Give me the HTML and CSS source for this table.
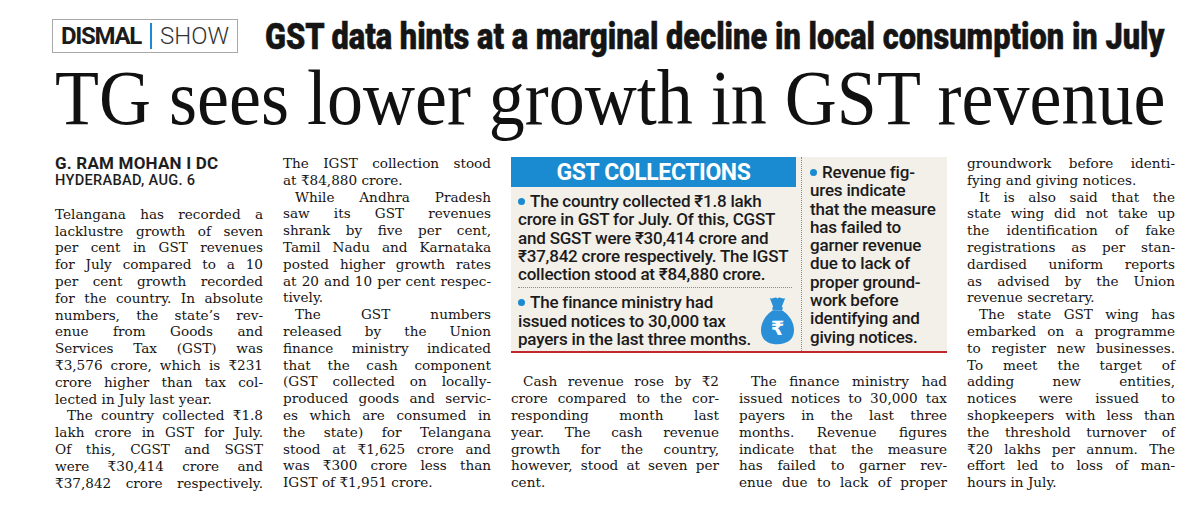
FILE: index.html
```html
<!DOCTYPE html>
<html lang="en">
<head>
<meta charset="utf-8">
<title>TG sees lower growth in GST revenue</title>
<link rel="stylesheet" href="styles.css">
</head>
<body>
<div class="page">
  <div class="kicker-row">
    <div class="kicker"><span class="k-bold">DISMAL</span><span class="k-bar"></span><span class="k-light">SHOW</span></div>
    <div class="deck">GST data hints at a marginal decline in local consumption in July</div>
  </div>
  <h1 class="headline"><span>TG sees lower growth in GST revenue</span></h1>

  <div class="grid">
    <div class="col c1">
      <div class="by-name">G. RAM MOHAN I DC</div>
      <div class="by-date">HYDERABAD, AUG. 6</div>
      <p class="para">
        <span class="j">Telangana has recorded a</span>
        <span class="j">lacklustre growth of seven</span>
        <span class="j">per cent in GST revenues</span>
        <span class="j">for July compared to a 10</span>
        <span class="j">per cent growth recorded</span>
        <span class="j">for the country. In absolute</span>
        <span class="j">numbers, the state’s rev-</span>
        <span class="j">enue from Goods and</span>
        <span class="j">Services Tax (GST) was</span>
        <span class="j">₹3,576 crore, which is ₹231</span>
        <span class="j">crore higher than tax col-</span>
        <span class="l">lected in July last year.</span>
      </p>
      <p class="para">
        <span class="j in">The country collected ₹1.8</span>
        <span class="j">lakh crore in GST for July.</span>
        <span class="j">Of this, CGST and SGST</span>
        <span class="j">were ₹30,414 crore and</span>
        <span class="j">₹37,842 crore respectively.</span>
      </p>
    </div>

    <div class="col c2">
      <p class="para">
        <span class="j">The IGST collection stood</span>
        <span class="l">at ₹84,880 crore.</span>
      </p>
      <p class="para">
        <span class="j in">While Andhra Pradesh</span>
        <span class="j">saw its GST revenues</span>
        <span class="j">shrank by five per cent,</span>
        <span class="j">Tamil Nadu and Karnataka</span>
        <span class="j">posted higher growth rates</span>
        <span class="j">at 20 and 10 per cent respec-</span>
        <span class="l">tively.</span>
      </p>
      <p class="para">
        <span class="j in">The GST numbers</span>
        <span class="j">released by the Union</span>
        <span class="j">finance ministry indicated</span>
        <span class="j">that the cash component</span>
        <span class="j">(GST collected on locally-</span>
        <span class="j">produced goods and servic-</span>
        <span class="j">es which are consumed in</span>
        <span class="j">the state) for Telangana</span>
        <span class="j">stood at ₹1,625 crore and</span>
        <span class="j">was ₹300 crore less than</span>
        <span class="l">IGST of ₹1,951 crore.</span>
      </p>
    </div>

    <div class="box">
      <div class="box-left">
        <div class="box-title">GST COLLECTIONS</div>
        <div class="pt"><span class="dot"></span>The country collected ₹1.8 lakh<br>crore in GST for July. Of this, CGST<br>and SGST were ₹30,414 crore and<br>₹37,842 crore respectively. The IGST<br>collection stood at ₹84,880 crore.</div>
        <div class="box-sep"></div>
        <div class="pt"><span class="dot"></span>The finance ministry had<br>issued notices to 30,000 tax<br>payers in the last three months.</div>
        <svg class="bag" viewBox="0 0 34 50" aria-hidden="true">
          <path d="M13 13.5 L9.5 4.5 C12.5 6.5 14.5 2.5 17 5 C19.5 2.5 21.5 6.5 24.5 4.5 L21 13.5 Z" fill="#2a8fd6"/>
          <rect x="12" y="13" width="10" height="3.2" rx="1.2" fill="#2a8fd6"/>
          <path d="M12.5 16.5 C5 21.5 0.5 29 1 37 C1.5 45.5 8 49.5 17 49.5 C26 49.5 32.5 45.5 33 37 C33.5 29 29 21.5 21.5 16.5 Z" fill="#2a8fd6"/>
          <text x="17" y="40.5" text-anchor="middle" class="bag-sym">₹</text>
        </svg>
      </div>
      <div class="box-right"><span class="dot"></span>Revenue fig-<br>ures indicate<br>that the measure<br>has failed to<br>garner revenue<br>due to lack of<br>proper ground-<br>work before<br>identifying and<br>giving notices.</div>
    </div>

    <div class="col c3">
      <p class="para">
        <span class="j in">Cash revenue rose by ₹2</span>
        <span class="j">crore compared to the cor-</span>
        <span class="j">responding month last</span>
        <span class="j">year. The cash revenue</span>
        <span class="j">growth for the country,</span>
        <span class="j">however, stood at seven per</span>
        <span class="l">cent.</span>
      </p>
    </div>

    <div class="col c4">
      <p class="para">
        <span class="j in">The finance ministry had</span>
        <span class="j">issued notices to 30,000 tax</span>
        <span class="j">payers in the last three</span>
        <span class="j">months. Revenue figures</span>
        <span class="j">indicate that the measure</span>
        <span class="j">has failed to garner rev-</span>
        <span class="j">enue due to lack of proper</span>
      </p>
    </div>

    <div class="col c5">
      <p class="para">
        <span class="j">groundwork before identi-</span>
        <span class="l">fying and giving notices.</span>
      </p>
      <p class="para">
        <span class="j in">It is also said that the</span>
        <span class="j">state wing did not take up</span>
        <span class="j">the identification of fake</span>
        <span class="j">registrations as per stan-</span>
        <span class="j">dardised uniform reports</span>
        <span class="j">as advised by the Union</span>
        <span class="l">revenue secretary.</span>
      </p>
      <p class="para">
        <span class="j in">The state GST wing has</span>
        <span class="j">embarked on a programme</span>
        <span class="j">to register new businesses.</span>
        <span class="j">To meet the target of</span>
        <span class="j">adding new entities,</span>
        <span class="j">notices were issued to</span>
        <span class="j">shopkeepers with less than</span>
        <span class="j">the threshold turnover of</span>
        <span class="j">₹20 lakhs per annum. The</span>
        <span class="j">effort led to loss of man-</span>
        <span class="l">hours in July.</span>
      </p>
    </div>
  </div>
</div>
</body>
</html>
```

FILE: styles.css
```css
html, body {
  margin: 0;
  padding: 0;
  background: #ffffff;
}

.page {
  width: 1120px;
  padding: 19px 25px 0 55px;
  color: #161414;
}

/* ---------- kicker row ---------- */
.kicker-row {
  display: flex;
  align-items: flex-start;
  height: 34px;
}

.kicker {
  flex: none;
  margin-left: -3px;
  width: 186px;
  height: 34px;
  box-sizing: border-box;
  border: 1.5px solid #a8a8a8;
  display: flex;
  align-items: center;
  padding-left: 8px;
  font-family: Roboto, "Liberation Sans", sans-serif;
  font-size: 24px;
  line-height: 1;
  color: #1b1b1b;
}

.k-bold {
  font-weight: 700;
  letter-spacing: -1.3px;
}

.k-bar {
  width: 2px;
  height: 26px;
  background: #1a8bd0;
  margin: 0 8px 0 9px;
}

.k-light {
  font-weight: 300;
  color: #333333;
}

/* condensed heavy deck: natural width, stretched vertically */
.deck {
  flex: none;
  margin-left: 27px;
  font-family: Roboto, "Liberation Sans", sans-serif;
  font-weight: 900;
  font-size: 30.8px;
  line-height: 34px;
  white-space: nowrap;
  color: #151515;
  -webkit-text-stroke: 0.4px #151515;
  transform: scaleY(1.22);
  transform-origin: left 11.6px;
}

/* ---------- main headline ---------- */
.headline {
  margin: 12px 0 0 0;
  font-family: "Liberation Serif", "Times New Roman", serif;
  font-weight: 400;
  font-size: 72px;
  line-height: 70px;
  white-space: nowrap;
  color: #111111;
}

.headline span {
  display: inline-block;
  transform: scaleY(1.097);
  transform-origin: left 59.3px;
}

/* ---------- body grid ---------- */
.grid {
  margin-top: 20px;
  display: grid;
  grid-template-columns: repeat(5, 208px);
  grid-template-rows: auto auto;
  column-gap: 20px;
  align-items: start;
  font-family: "DejaVu Serif", "Liberation Serif", serif;
  font-size: 13.6px;
  line-height: 16.8px;
}

.c1 { grid-column: 1; grid-row: 1 / 3; }
.c2 { grid-column: 2; grid-row: 1 / 3; }
.box { grid-column: 3 / 5; grid-row: 1; }
.c3 { grid-column: 3; grid-row: 2; }
.c4 { grid-column: 4; grid-row: 2; }
.c5 { grid-column: 5; grid-row: 1 / 3; }

.para {
  margin: 0;
}

.j {
  display: block;
  text-align: justify;
  text-align-last: justify;
}

.l {
  display: block;
  text-align: left;
}

.in {
  text-indent: 12px;
}

.by-name {
  font-family: Roboto, "Liberation Sans", sans-serif;
  font-weight: 700;
  font-size: 17px;
  line-height: 17px;
  letter-spacing: 0.2px;
  color: #1e1e1e;
}

.by-date {
  font-family: Roboto, "Liberation Sans", sans-serif;
  font-weight: 500;
  font-size: 14.6px;
  line-height: 17px;
  letter-spacing: 0.3px;
  margin-bottom: 16.8px;
  color: #1e1e1e;
}

/* ---------- fact box ---------- */
.box {
  margin-top: 2px;
  margin-bottom: 19.6px;
  background: #f3efe9;
  border-bottom: 2.5px solid #c1272d;
  display: flex;
  font-family: Roboto, "Liberation Sans", sans-serif;
  font-weight: 500;
  font-size: 17px;
  line-height: 18.3px;
  letter-spacing: -0.2px;
  color: #1b1b1b;
}

.box-left {
  position: relative;
  flex: none;
  width: 287px;
  padding-bottom: 3px;
}

.box-title {
  width: 285px;
  height: 30px;
  background: #1a8bd0;
  color: #ffffff;
  font-weight: 700;
  font-size: 23px;
  line-height: 31px;
  letter-spacing: -0.4px;
  text-align: center;
}

.pt {
  padding: 5px 0 0 7px;
  white-space: nowrap;
}

.box-sep {
  border-top: 1px dotted #8a8a8a;
  margin: 4px 6px 0 7px;
}

.box-right {
  flex: 1;
  margin-left: 3px;
  border-left: 1px dotted #8a8a8a;
  padding: 6px 0 0 8px;
  white-space: nowrap;
}

.dot {
  display: inline-block;
  width: 7px;
  height: 7px;
  border-radius: 50%;
  background: #1a8bd0;
  margin-right: 5px;
  vertical-align: 2px;
}

.bag {
  position: absolute;
  left: 249px;
  bottom: 6px;
  width: 35px;
  height: 52px;
}

.bag-sym {
  fill: #ffffff;
  font-family: "DejaVu Sans", Roboto, sans-serif;
  font-weight: 700;
  font-size: 19px;
}
```
